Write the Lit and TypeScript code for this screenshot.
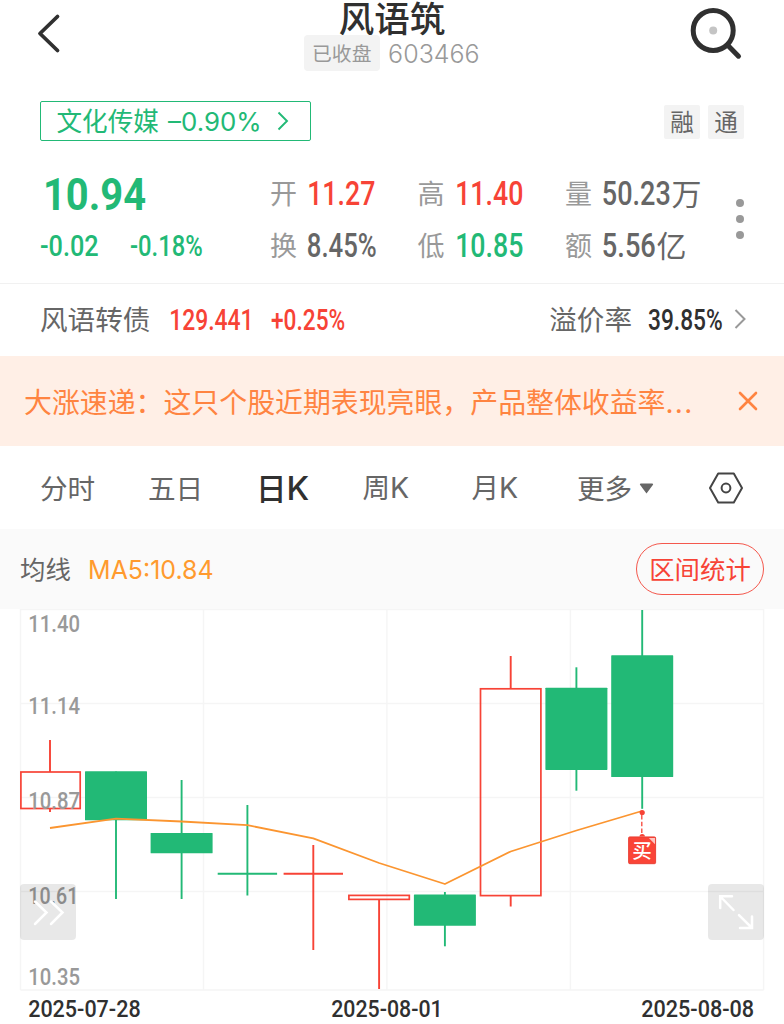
import { LitElement, html, svg, css, nothing } from "lit";
import { customElement, property } from "lit/decorators.js";

const RED = "#f74336";
const GREEN = "#22b976";
const GREY = "#999999";

/** Figures set to a fixed optical width; the box is the ink box of the digits. */
@customElement("num-text")
class NumText extends LitElement {
  @property() text = "";
  @property({ type: Number }) w = 60;
  @property({ type: Number }) cap = 20;
  @property({ type: Number }) weight = 500;
  @property() family = "Roboto";
  static styles = css`
    :host { display: block; flex: none; }
    svg { display: block; overflow: visible; }
  `;
  render() {
    const fs = this.cap / (this.family === "Inter" ? 0.727 : 0.711);
    const l = fs * (this.text[0] === "1" ? 0.025 : 0.035);
    const r = fs * (this.text.endsWith("1") ? 0.09 : 0.025);
    return html`<svg width=${this.w} height=${this.cap}>
      <text x=${-l} y=${this.cap} textLength=${this.w + l + r} lengthAdjust="spacingAndGlyphs"
        font-family="${this.family}, sans-serif" font-size=${fs} font-weight=${this.weight} fill="currentColor">${this.text}</text>
    </svg>`;
  }
}

interface Candle { x: number; hi: number; lo: number; top: number; bottom: number; up: boolean }

const CANDLES: Candle[] = [
  { x: 50, hi: 740, lo: 812, top: 772, bottom: 808.5, up: true },
  { x: 116, hi: 771.5, lo: 899, top: 771.5, bottom: 820, up: false },
  { x: 181.6, hi: 780, lo: 899, top: 833.3, bottom: 853, up: false },
  { x: 247.4, hi: 805, lo: 895.5, top: 873.8, bottom: 873.8, up: false },
  { x: 313.3, hi: 845, lo: 950, top: 873.8, bottom: 873.8, up: true },
  { x: 379.1, hi: 895.5, lo: 989, top: 895.4, bottom: 899.4, up: true },
  { x: 444.9, hi: 892, lo: 946.3, top: 894.8, bottom: 925.5, up: false },
  { x: 510.7, hi: 656, lo: 906.5, top: 688.8, bottom: 895.6, up: true },
  { x: 576.4, hi: 667.3, lo: 790.7, top: 688, bottom: 769.6, up: false },
  { x: 642.2, hi: 610, lo: 808.8, top: 655.6, bottom: 776.7, up: false },
];
const MA5 = "50,828 116,818.6 181.6,821.5 247.4,825.2 313.3,838.3 379.1,863 444.9,884 510.7,851.5 576.4,830.5 642,811";
const Y_LABELS: [string, number][] = [["11.40", 632.3], ["11.14", 713.5], ["10.87", 809.2], ["10.61", 904.2], ["10.35", 985.3]];
const DATES: [string, number][] = [["2025-07-28", 111], ["2025-08-01", 108.5], ["2025-08-08", 111.5]];

@customElement("k-chart")
class KChart extends LitElement {
  static styles = css`
    :host { display: block; position: relative; }
    .plot { display: block; }
    .tool { position: absolute; top: 275px; width: 56px; height: 56px; border-radius: 4px; background: rgba(0, 0, 0, 0.09); }
    .tool svg { display: block; }
    .prev { left: 20px; }
    .full { right: 20px; }
  `;
  candle(c: Candle) {
    const color = c.up ? RED : GREEN;
    const flat = c.top === c.bottom;
    const hollow = c.up && !flat;
    const left = Math.max(c.x - 30.2, 20.9);
    return svg`
      <path d=${`M${c.x} ${c.hi}V${hollow ? c.top : c.lo}M${c.x} ${hollow ? c.bottom : c.lo}V${c.lo}`} stroke=${color} stroke-width="1.9" />
      ${flat ? svg`<path d=${`M${c.x - 29.7} ${c.top}H${c.x + 29.7}`} stroke=${color} stroke-width="1.9" />` : nothing}
      ${hollow ? svg`<rect x=${left} y=${c.top} width=${c.x + 30.2 - left} height=${c.bottom - c.top} fill="none" stroke=${color} stroke-width="1.7" />` : nothing}
      ${!c.up && !flat ? svg`<rect x=${c.x - 31} y=${c.top - 0.3} width="62" height=${c.bottom - c.top + 0.6} rx="0.6" fill=${color} />` : nothing}`;
  }
  render() {
    return html`
      <svg class="plot" width="784" height="383" viewBox="0 609 784 383">
        <path d="M20.5 609.5H763.7M20.5 703.5H763.7M20.5 797.5H763.7M20.5 891.5H763.7M20.5 990H763.7M20.5 609V990M203.5 609V990M386.9 609V990M570.4 609V990M763.6 609V990"
          stroke="#f5f5f5" stroke-width="1.4" />
        ${CANDLES.map((c) => this.candle(c))}
        <polyline points=${MA5} fill="none" stroke="#fb9530" stroke-width="1.8" stroke-linejoin="round" />
        ${Y_LABELS.map(([t, y]) => svg`<text x="28.3" y=${y} textLength=${t === "10.61" ? 50 : 51.7} lengthAdjust="spacingAndGlyphs"
          font-family="Roboto, sans-serif" font-size="24.3" font-weight="500" fill=${GREY}>${t}</text>`)}
        <circle cx="642.2" cy="812.5" r="2.6" fill=${RED} />
        <path d="M641.8 815V836" stroke=${RED} stroke-width="1.3" stroke-dasharray="4.5 2.2" />
        <path d="M639.5 836.6a2.7 2.7 0 0 1 5.4 0z" fill=${RED} />
        <rect x="628.6" y="836.9" width="27" height="26.8" rx="1.2" fill="#fa4437" stroke="#e63a2f" stroke-width="0.9" />
        <path d="M648.8 838H655V844.2z" fill="#fdc5c0" />
        <text x="642" y="858" text-anchor="middle" font-family="Noto Sans CJK SC, sans-serif" font-size="19.5" font-weight="500" fill="#fff">买</text>
      </svg>
      <div class="tool prev">
        <svg width="56" height="56" fill="none" stroke="#fff" stroke-width="2.5" stroke-linecap="round"><path d="M15 17.5 26.5 28.5 15 40M31 17.5 42.5 28.5 31 40" /></svg>
      </div>
      <div class="tool full">
        <svg width="56" height="56" fill="none" stroke="#fff" stroke-width="2.5" stroke-linecap="round"><path d="M12.2 24V12.3H24M12.8 13 25.5 26M31 31.2 43.5 43.5M44 32.5V44H32" /></svg>
      </div>`;
  }
}

const n = (text: string, w: number, cap: number, cls = "", weight = 500, family = "Roboto") =>
  html`<num-text class=${cls} .text=${text} .w=${w} .cap=${cap} .weight=${weight} .family=${family}></num-text>`;

@customElement("app-root")
class AppRoot extends LitElement {
  static styles = css`
    :host { display: block; width: 784px; height: 1024px; overflow: hidden; background: #fff; color: #666; font-family: "Noto Sans CJK SC", sans-serif; font-size: 27.6px; line-height: 1; }
    * { box-sizing: border-box; }
    svg { display: block; flex: none; }
    .row { display: flex; align-items: center; white-space: nowrap; }
    .latin { font-family: Inter, sans-serif; }
    .red { color: #f74336; }
    .green { color: #22b976; }
    .grey { color: #999; }
    .dark { color: #303030; }
    .header { display: grid; grid-template-columns: 120px 1fr 120px; height: 90px; }
    .back { padding: 13px 0 0 36px; }
    .search { padding: 7px 0 0 26px; }
    .titles { display: flex; flex-direction: column; align-items: center; padding-right: 1.5px; }
    .title { font-size: 35.5px; font-weight: 500; color: #303030; height: 35px; line-height: 34px; padding-left: 1.5px; }
    .code { gap: 9px; }
    .closed { height: 36px; width: 76px; border-radius: 4px; background: #f3f3f3; color: #999; font-size: 19.8px; line-height: 35px; text-align: center; }
    .tags { height: 62px; padding: 0 40px; justify-content: space-between; }
    .sector { width: 271px; height: 40px; border: 1.5px solid #22b976; border-radius: 2px; color: #22b976; font-size: 25.6px; padding-left: 15.5px; }
    .sector .name { padding-bottom: 2px; }
    .sector svg { margin-left: 16px; }
    .sector num-text { margin-left: 10px; }
    .marks { gap: 8px; padding-top: 1px; }
    .mark { width: 36px; height: 34px; border-radius: 2px; background: #f3f3f3; font-size: 23.6px; line-height: 32px; text-align: center; }
    .quote { display: flex; height: 131px; padding: 27px 40px 0 41px; }
    .last { width: 229px; }
    .price { height: 31px; padding-left: 2.5px; }
    .diff { margin-top: 25px; gap: 33px; }
    .grid { display: grid; grid-template-columns: 147.5px 147.5px 159px; grid-template-rows: 31px 31px; row-gap: 21px; margin-top: -1.5px; }
    .grid .lab { color: #999; width: 27px; margin-right: 11px; font-size: 27px; padding-bottom: 1.5px; }
    .grid .unit { font-size: 30px; margin-left: 1.5px; padding-bottom: 2.5px; }
    .dots { display: grid; gap: 8px; margin: 20px 0 0 11.5px; align-content: start; }
    .dot { width: 8px; height: 8px; border-radius: 50%; background: #999; }
    .bond { height: 73px; border-top: 1.5px solid #f1f1f1; padding: 0 38px 1.5px 40px; }
    .bond span { padding-bottom: 1px; }
    .bond .p1 { margin-left: 19.5px; }
    .bond .p2 { margin-left: 21.5px; }
    .bond .prem { margin-left: auto; }
    .bond .p3 { margin: 0 12px 0 17px; }
    .banner { height: 90px; background: #ffefe6; color: #ff8441; padding: 0 26px 0 24px; justify-content: space-between; font-size: 27.9px; }
    .banner .msg { width: 672px; overflow: hidden; line-height: 40px; padding-top: 1px; font-weight: 400; }
    .banner .latin { letter-spacing: 1.3px; }
    .tabs { height: 83px; padding: 1px 41px 0 40px; }
    .tab { flex: none; }
    .t1 { width: 108px; } .t2 { width: 109px; } .t3 { width: 105.5px; } .t4 { width: 109px; } .t5 { width: 105.5px; }
    .tab .latin { font-size: 28.5px; }
    .active { font-size: 30.5px; font-weight: 500; color: #303030; margin-left: -1px; margin-right: 1px; }
    .active .latin { font-size: 33px; }
    .more { gap: 7px; width: 132px; }
    .more .txt { padding-bottom: 1px; }
    .ma { height: 80px; background: #fafafa; padding: 0 20px; font-size: 25.4px; }
    .ma .lab { padding-bottom: 1px; }
    .ma num-text { margin-left: 18px; color: #ff9a2e; }
    .stat { margin-left: auto; width: 128px; height: 52px; border: 1.4px solid #f4584d; border-radius: 26px; color: #f74336; line-height: 48px; text-align: center; }
    .dates { padding: 7.5px 30px 0 29px; }
    .dates num-text + num-text { margin-left: 191.5px; }
    .dates num-text:last-child { margin-left: 202px; }
  `;
  cell(label: string, value: unknown, unit = "") {
    return html`<div class="row"><span class="lab">${label}</span>${value}${unit ? html`<span class="unit">${unit}</span>` : nothing}</div>`;
  }
  render() {
    const k = html`<span class="latin">K</span>`;
    return html`
      <div class="header">
        <div class="back"><svg width="26" height="42" fill="none" stroke="#303030" stroke-width="3.8" stroke-linecap="round" stroke-linejoin="round"><path d="M21.5 3.5 4 20.5 21.5 37.5" /></svg></div>
        <div class="titles">
          <div class="title">风语筑</div>
          <div class="row code"><div class="closed">已收盘</div>${n("603466", 90, 18.7, "grey", 350, "Inter")}</div>
        </div>
        <div class="search"><svg width="54" height="54" fill="none" stroke="#303030" stroke-linecap="round"><circle cx="23.2" cy="23.5" r="20" stroke-width="5" /><path d="M38 38.5 48.5 49.2" stroke-width="5" /><circle cx="23.2" cy="23.5" r="4" fill="#c4c4c4" stroke="none" /></svg></div>
      </div>
      <div class="row tags">
        <div class="row sector"><span class="name">文化传媒</span>${n("–0.90%", 92, 18.5, "", 400, "Inter")}<svg width="12" height="20" fill="none" stroke="#22b976" stroke-width="1.9"><path d="M1.5 1.5 10 10 1.5 18.5" /></svg></div>
        <div class="row marks"><span class="mark">融</span><span class="mark">通</span></div>
      </div>
      <div class="quote">
        <div class="last">
          <div class="price">${n("10.94", 101, 31, "green", 700)}</div>
          <div class="row diff">${n("-0.02", 57, 20.5, "green")}${n("-0.18%", 71, 20.5, "green")}</div>
        </div>
        <div class="grid">
          ${this.cell("开", n("11.27", 66.5, 23.5, "red"))}
          ${this.cell("高", n("11.40", 66.5, 23.5, "red"))}
          ${this.cell("量", n("50.23", 67, 23.5), "万")}
          ${this.cell("换", n("8.45%", 68, 23.5))}
          ${this.cell("低", n("10.85", 66.5, 23.5, "green"))}
          ${this.cell("额", n("5.56", 52, 23.5), "亿")}
        </div>
        <div class="dots"><i class="dot"></i><i class="dot"></i><i class="dot"></i></div>
      </div>
      <div class="row bond">
        <span>风语转债</span>${n("129.441", 81, 20.5, "red p1")}${n("+0.25%", 72.5, 20.5, "red p2")}
        <span class="prem">溢价率</span>${n("39.85%", 73, 20.5, "dark p3")}
        <svg width="12" height="20" fill="none" stroke="#999" stroke-width="2"><path d="M1.5 1 10.5 10 1.5 19" /></svg>
      </div>
      <div class="row banner">
        <span class="msg">大涨速递：这只个股近期表现亮眼，产品整体收益率<span class="latin">...</span></span>
        <svg width="20" height="20" stroke="#ff8441" stroke-width="2.6" stroke-linecap="round"><path d="M2 2 18 18M18 2 2 18" /></svg>
      </div>
      <div class="row tabs">
        <span class="tab t1">分时</span><span class="tab t2">五日</span><span class="tab t3 active">日${k}</span><span class="tab t4">周${k}</span><span class="tab t5">月${k}</span>
        <span class="row more"><span class="txt">更多</span><svg width="15" height="11" fill="#666"><path d="M1.5.5H13.5L14.2 1.5 7.5 10.5.8 1.5z" /></svg></span>
        <svg width="34" height="32" fill="none" stroke="#444" stroke-width="2" stroke-linejoin="round"><path d="M9.2 1.5H24.8L33 16 24.8 30.5H9.2L1 16z" /><circle cx="17" cy="16" r="4.4" /></svg>
      </div>
      <div class="row ma">
        <span class="lab">均线</span>${n("MA5:10.84", 124, 18.7, "", 400, "Inter")}
        <div class="stat">区间统计</div>
      </div>
      <k-chart></k-chart>
      <div class="row dates">${DATES.map(([d, w]) => n(d, w, 17.2, "dark"))}</div>`;
  }
}
